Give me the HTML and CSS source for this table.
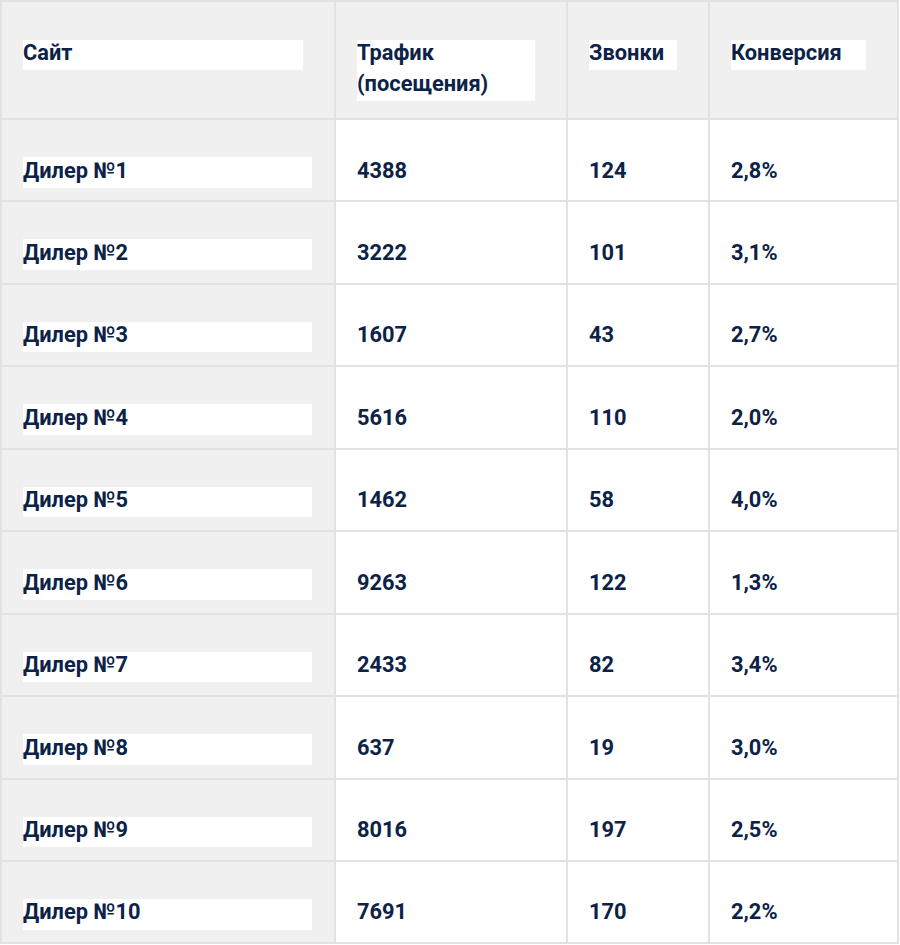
FILE: index.html
```html
<!DOCTYPE html>
<html lang="ru">
<head>
<meta charset="utf-8">
<title>Конверсия</title>
<link rel="stylesheet" href="styles.css">
</head>
<body>
<div class="table">
  <div class="cell head"><p class="box"><span class="t">Сайт</span></p></div>
  <div class="cell head"><p class="box"><span class="t">Трафик<br>(посещения)</span></p></div>
  <div class="cell head"><p class="box"><span class="t">Звонки</span></p></div>
  <div class="cell head"><p class="box"><span class="t">Конверсия</span></p></div>

  <div class="cell site"><p class="box"><span class="t">Дилер №1</span></p></div>
  <div class="cell"><p class="val"><span class="t">4388</span></p></div>
  <div class="cell"><p class="val"><span class="t">124</span></p></div>
  <div class="cell"><p class="val"><span class="t">2,8%</span></p></div>

  <div class="cell site"><p class="box"><span class="t">Дилер №2</span></p></div>
  <div class="cell"><p class="val"><span class="t">3222</span></p></div>
  <div class="cell"><p class="val"><span class="t">101</span></p></div>
  <div class="cell"><p class="val"><span class="t">3,1%</span></p></div>

  <div class="cell site"><p class="box"><span class="t">Дилер №3</span></p></div>
  <div class="cell"><p class="val"><span class="t">1607</span></p></div>
  <div class="cell"><p class="val"><span class="t">43</span></p></div>
  <div class="cell"><p class="val"><span class="t">2,7%</span></p></div>

  <div class="cell site"><p class="box"><span class="t">Дилер №4</span></p></div>
  <div class="cell"><p class="val"><span class="t">5616</span></p></div>
  <div class="cell"><p class="val"><span class="t">110</span></p></div>
  <div class="cell"><p class="val"><span class="t">2,0%</span></p></div>

  <div class="cell site"><p class="box"><span class="t">Дилер №5</span></p></div>
  <div class="cell"><p class="val"><span class="t">1462</span></p></div>
  <div class="cell"><p class="val"><span class="t">58</span></p></div>
  <div class="cell"><p class="val"><span class="t">4,0%</span></p></div>

  <div class="cell site"><p class="box"><span class="t">Дилер №6</span></p></div>
  <div class="cell"><p class="val"><span class="t">9263</span></p></div>
  <div class="cell"><p class="val"><span class="t">122</span></p></div>
  <div class="cell"><p class="val"><span class="t">1,3%</span></p></div>

  <div class="cell site"><p class="box"><span class="t">Дилер №7</span></p></div>
  <div class="cell"><p class="val"><span class="t">2433</span></p></div>
  <div class="cell"><p class="val"><span class="t">82</span></p></div>
  <div class="cell"><p class="val"><span class="t">3,4%</span></p></div>

  <div class="cell site"><p class="box"><span class="t">Дилер №8</span></p></div>
  <div class="cell"><p class="val"><span class="t">637</span></p></div>
  <div class="cell"><p class="val"><span class="t">19</span></p></div>
  <div class="cell"><p class="val"><span class="t">3,0%</span></p></div>

  <div class="cell site"><p class="box"><span class="t">Дилер №9</span></p></div>
  <div class="cell"><p class="val"><span class="t">8016</span></p></div>
  <div class="cell"><p class="val"><span class="t">197</span></p></div>
  <div class="cell"><p class="val"><span class="t">2,5%</span></p></div>

  <div class="cell site"><p class="box"><span class="t">Дилер №10</span></p></div>
  <div class="cell"><p class="val"><span class="t">7691</span></p></div>
  <div class="cell"><p class="val"><span class="t">170</span></p></div>
  <div class="cell"><p class="val"><span class="t">2,2%</span></p></div>
</div>
</body>
</html>
```

FILE: styles.css
```css
html, body {
  margin: 0;
  padding: 0;
  background: #ffffff;
}

body {
  font-family: Roboto, "Liberation Sans", sans-serif;
  font-weight: 700;
  font-size: 21.8px;
  color: #0c2246;
}

.table {
  display: grid;
  grid-template-columns: 332px 230px 140px 187px;
  grid-template-rows: 116px repeat(10, 80.45px);
  gap: 2px;
  padding: 2px;
  width: max-content;
  background: #e2e2e2;
}

.cell {
  background: #ffffff;
  padding: 37px 22px 0 21px;
}

.cell.head {
  background: #f0f0f0;
  padding: 37.5px 31px 0 21px;
}

.cell.site {
  background: #f0f0f0;
}

.box,
.val {
  margin: 0;
  line-height: 30.6px;
}

.box {
  background: #ffffff;
}

.t {
  position: relative;
  top: -1.5px;
}
```
